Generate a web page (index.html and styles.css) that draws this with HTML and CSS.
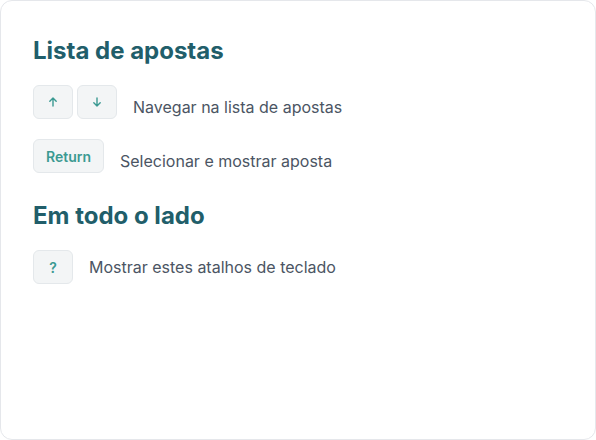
FILE: index.html
```html
<!DOCTYPE html>
<html lang="pt">

<head>
    <meta charset="UTF-8" />
    <meta name="viewport" content="width=device-width, initial-scale=1.0" />
    <title>Atalhos de teclado</title>
    <link rel="stylesheet" href="styles.css">
</head>

<body>
    <div class="shortcuts">
        <section class="group">
            <h2 class="section-title">Lista de apostas</h2>
            <div class="shortcut shortcut-low">
                <div class="keys">
                    <kbd class="key">
                        <svg width="10" height="10" viewBox="0 0 10 10" fill="none" stroke="currentColor" stroke-width="1.4" stroke-linecap="round" stroke-linejoin="round">
                            <path d="M5 9V1M1.8 4.2 5 1l3.2 3.2" />
                        </svg>
                    </kbd>
                    <kbd class="key">
                        <svg width="10" height="10" viewBox="0 0 10 10" fill="none" stroke="currentColor" stroke-width="1.4" stroke-linecap="round" stroke-linejoin="round">
                            <path d="M5 1v8M1.8 5.8 5 9l3.2-3.2" />
                        </svg>
                    </kbd>
                </div>
                <span class="label">Navegar na lista de apostas</span>
            </div>
            <div class="shortcut shortcut-low">
                <div class="keys">
                    <kbd class="key">Return</kbd>
                </div>
                <span class="label">Selecionar e mostrar aposta</span>
            </div>
        </section>

        <section class="group">
            <h2 class="section-title">Em todo o lado</h2>
            <div class="shortcut">
                <div class="keys">
                    <kbd class="key">?</kbd>
                </div>
                <span class="label">Mostrar estes atalhos de teclado</span>
            </div>
        </section>
    </div>
</body>

</html>
```

FILE: styles.css
```css
* {
    margin: 0;
    padding: 0;
    box-sizing: border-box;
}

body {
    font-family: 'Inter', 'Noto Sans', sans-serif;
    background: #fff;
}

.shortcuts {
    height: 440px;
    padding: 34px 32px;
    border: 1px solid #e5e7eb;
    border-radius: 12px;
    background: #fff;
    display: flex;
    flex-direction: column;
    gap: 27px;
}

.group {
    display: flex;
    flex-direction: column;
    gap: 20px;
}

.section-title {
    font-size: 24px;
    font-weight: 700;
    line-height: 32px;
    color: #215e6a;
    margin-bottom: -2px;
}

.shortcut {
    display: flex;
    align-items: center;
    gap: 16px;
}

.keys {
    display: flex;
    gap: 4px;
}

.key {
    display: flex;
    align-items: center;
    justify-content: center;
    min-width: 40px;
    height: 34px;
    padding: 0 12px;
    border: 1px solid #e4e8eb;
    border-radius: 6px;
    background: #f3f5f6;
    color: #3b9a92;
    font-family: inherit;
    font-size: 14px;
    font-weight: 600;
}

.label {
    font-size: 16px;
    line-height: 24px;
    color: #4b5563;
}

/* labels in the first group sit a little below the key caps */
.shortcut-low .label {
    padding-top: 10px;
}
```
